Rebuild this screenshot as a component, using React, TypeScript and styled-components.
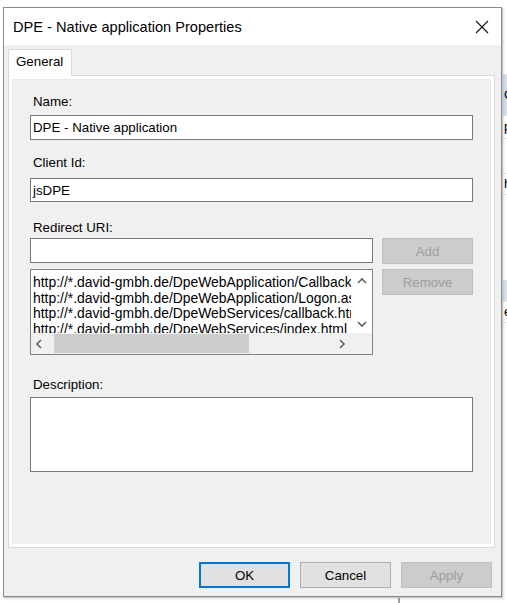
import React from "react";
import styled, { createGlobalStyle } from "styled-components";

const Global = createGlobalStyle`
  html, body {
    margin: 0;
    padding: 0;
    background: #ffffff;
  }
  body {
    font-family: "Liberation Sans", Arial, sans-serif;
    font-size: 13.3px;
    color: #000;
  }
`;

const Desktop = styled.div`
  position: relative;
  width: 507px;
  height: 603px;
  overflow: hidden;
  padding: 7px 0 0 3px;
  box-sizing: border-box;
`;

const BackWindow = styled.div`
  position: absolute;
  left: 398px;
  top: 40px;
  width: 140px;
  height: 580px;
  background: #ffffff;
  border-left: 2px solid #a0a0a0;
  display: flex;
  flex-direction: column;
`;

const BackRow = styled.div<{ $h: number; $bg?: string }>`
  height: ${(p) => p.$h}px;
  background: ${(p) => p.$bg || "transparent"};
  border-bottom: 1px solid #e5e5e5;
  font-size: 13.3px;
  line-height: ${(p) => p.$h}px;
  padding-left: 104px;
  color: #000;
`;

const Window = styled.div`
  position: relative;
  width: 499px;
  height: 590px;
  box-sizing: border-box;
  border: 1px solid #8a8a8a;
  background: #f0f0f0;
  box-shadow: 1px 1px 0 #c8c8c8, 2px 2px 2px rgba(0, 0, 0, 0.12);
  display: flex;
  flex-direction: column;
`;

const TitleBar = styled.div`
  height: 37px;
  background: #ffffff;
  display: flex;
  align-items: center;
  justify-content: space-between;
  padding: 0 12px 0 9px;
`;

const Title = styled.div`
  font-size: 14.6px;
  color: #000;
  padding-top: 1px;
`;

const CloseBox = styled.div`
  width: 14px;
  height: 14px;
  display: flex;
`;

const Body = styled.div`
  flex: 1;
  display: flex;
  flex-direction: column;
  padding: 4px 6px 8px 4px;
`;

const TabStrip = styled.div`
  display: flex;
  height: 26px;
`;

const Tab = styled.div`
  width: 64px;
  background: #ffffff;
  border: 1px solid #d9d9d9;
  border-bottom: none;
  font-size: 13.3px;
  line-height: 24px;
  padding-left: 7px;
  box-sizing: border-box;
  position: relative;
  z-index: 1;
  margin-bottom: -1px;
`;

const Panel = styled.div`
  height: 473px;
  box-sizing: border-box;
  border: 1px solid #d9d9d9;
  background: #ffffff;
  padding: 3px;
  display: flex;
`;

const PanelInner = styled.div`
  flex: 1;
  background: #f0f0f0;
  border: 1px solid #ebebeb;
  padding: 14px 17px 0 17px;
  display: flex;
  flex-direction: column;
`;

const Label = styled.div<{ $top: number; $bottom: number }>`
  margin-top: ${(p) => p.$top}px;
  margin-bottom: ${(p) => p.$bottom}px;
  padding-left: 3px;
  line-height: 16px;
  height: 16px;
  color: #000;
`;

const TextBox = styled.div<{ $h?: number }>`
  height: ${(p) => p.$h || 25}px;
  box-sizing: border-box;
  border: 1px solid #7a7a7a;
  background: #ffffff;
  padding: 0 2px;
  line-height: 23px;
  white-space: nowrap;
  overflow: hidden;
`;

const UriRow = styled.div`
  display: flex;
  gap: 9px;
`;

const UriLeft = styled.div`
  width: 343px;
  display: flex;
  flex-direction: column;
  gap: 6px;
`;

const UriButtons = styled.div`
  flex: 1;
  display: flex;
  flex-direction: column;
  gap: 5px;
`;

const Button = styled.div<{ $disabled?: boolean; $default?: boolean; $w?: number }>`
  height: 26px;
  width: ${(p) => (p.$w ? p.$w + "px" : "auto")};
  box-sizing: border-box;
  display: flex;
  align-items: center;
  justify-content: center;
  background: ${(p) => (p.$disabled ? "#cccccc" : "#e1e1e1")};
  border: ${(p) =>
    p.$default ? "2px solid #0078d7" : p.$disabled ? "1px solid #bfbfbf" : "1px solid #adadad"};
  color: ${(p) => (p.$disabled ? "#9d9d9d" : "#000")};
  font-size: 13.3px;
`;

const ListBox = styled.div`
  height: 86px;
  box-sizing: border-box;
  border: 1px solid #828282;
  background: #ffffff;
  display: grid;
  grid-template-columns: 1fr 21px;
  grid-template-rows: 1fr 21px;
`;

const ListItems = styled.div`
  overflow: hidden;
  padding: 5px 0 0 2px;
  white-space: nowrap;
`;

const ListItem = styled.div`
  font-size: 13.9px;
  line-height: 15.7px;
  height: 15.7px;
`;

const VScroll = styled.div`
  background: #ffffff;
  display: flex;
  flex-direction: column;
  align-items: center;
  justify-content: space-between;
  padding: 7px 0 5px;
`;

const HScroll = styled.div`
  background: #f0f0f0;
  display: flex;
  align-items: center;
  padding: 0 5px 0 4px;
`;

const Thumb = styled.div`
  width: 195px;
  height: 19px;
  background: #cdcdcd;
  margin-left: 11px;
`;

const Spacer = styled.div`
  flex: 1;
`;

const Corner = styled.div`
  background: #f0f0f0;
`;

const Footer = styled.div`
  display: flex;
  justify-content: flex-end;
  gap: 10px;
  margin-top: 14px;
  padding-right: 3px;
`;

const Chevron = ({ dir }: { dir: "up" | "down" | "left" | "right" }) => {
  const d = {
    up: "M1 6 L5 2 L9 6",
    down: "M1 2 L5 6 L9 2",
    left: "M6 1 L2 5 L6 9",
    right: "M2 1 L6 5 L2 9",
  }[dir];
  const vertical = dir === "up" || dir === "down";
  return (
    <svg
      width={vertical ? 10 : 8}
      height={vertical ? 8 : 10}
      viewBox={vertical ? "0 0 10 8" : "0 0 8 10"}
    >
      <path d={d} fill="none" stroke="#606060" strokeWidth="1.6" />
    </svg>
  );
};

const uris = [
  "http://*.david-gmbh.de/DpeWebApplication/Callback.aspx",
  "http://*.david-gmbh.de/DpeWebApplication/Logon.aspx",
  "http://*.david-gmbh.de/DpeWebServices/callback.html",
  "http://*.david-gmbh.de/DpeWebServices/index.html",
];

export default function App() {
  return (
    <Desktop>
      <Global />
      <BackWindow>
        <BackRow $h={34} />
        <BackRow $h={40} $bg="#cfe0f0">G</BackRow>
        <BackRow $h={22}>p</BackRow>
        <BackRow $h={34} />
        <BackRow $h={20}>h</BackRow>
        <BackRow $h={85} />
        <BackRow $h={20} $bg="#d5e3f1" />
        <BackRow $h={20}>e</BackRow>
      </BackWindow>
      <Window>
        <TitleBar>
          <Title>DPE - Native application Properties</Title>
          <CloseBox>
            <svg width="14" height="14" viewBox="0 0 14 14">
              <path d="M1 1 L13 13 M13 1 L1 13" stroke="#111" strokeWidth="1.1" />
            </svg>
          </CloseBox>
        </TitleBar>
        <Body>
          <TabStrip>
            <Tab>General</Tab>
          </TabStrip>
          <Panel>
            <PanelInner>
              <Label $top={0} $bottom={5}>Name:</Label>
              <TextBox>DPE - Native application</TextBox>
              <Label $top={15} $bottom={7}>Client Id:</Label>
              <TextBox $h={24}>jsDPE</TextBox>
              <Label $top={18} $bottom={2}>Redirect URI:</Label>
              <UriRow>
                <UriLeft>
                  <TextBox />
                  <ListBox>
                    <ListItems>
                      {uris.map((u) => (
                        <ListItem key={u}>{u}</ListItem>
                      ))}
                    </ListItems>
                    <VScroll>
                      <Chevron dir="up" />
                      <Chevron dir="down" />
                    </VScroll>
                    <HScroll>
                      <Chevron dir="left" />
                      <Thumb />
                      <Spacer />
                      <Chevron dir="right" />
                    </HScroll>
                    <Corner />
                  </ListBox>
                </UriLeft>
                <UriButtons>
                  <Button $disabled>Add</Button>
                  <Button $disabled>Remove</Button>
                </UriButtons>
              </UriRow>
              <Label $top={22} $bottom={4}>Description:</Label>
              <TextBox $h={75} />
            </PanelInner>
          </Panel>
          <Footer>
            <Button $default $w={91}>OK</Button>
            <Button $w={91}>Cancel</Button>
            <Button $disabled $w={91}>Apply</Button>
          </Footer>
        </Body>
      </Window>
    </Desktop>
  );
}
